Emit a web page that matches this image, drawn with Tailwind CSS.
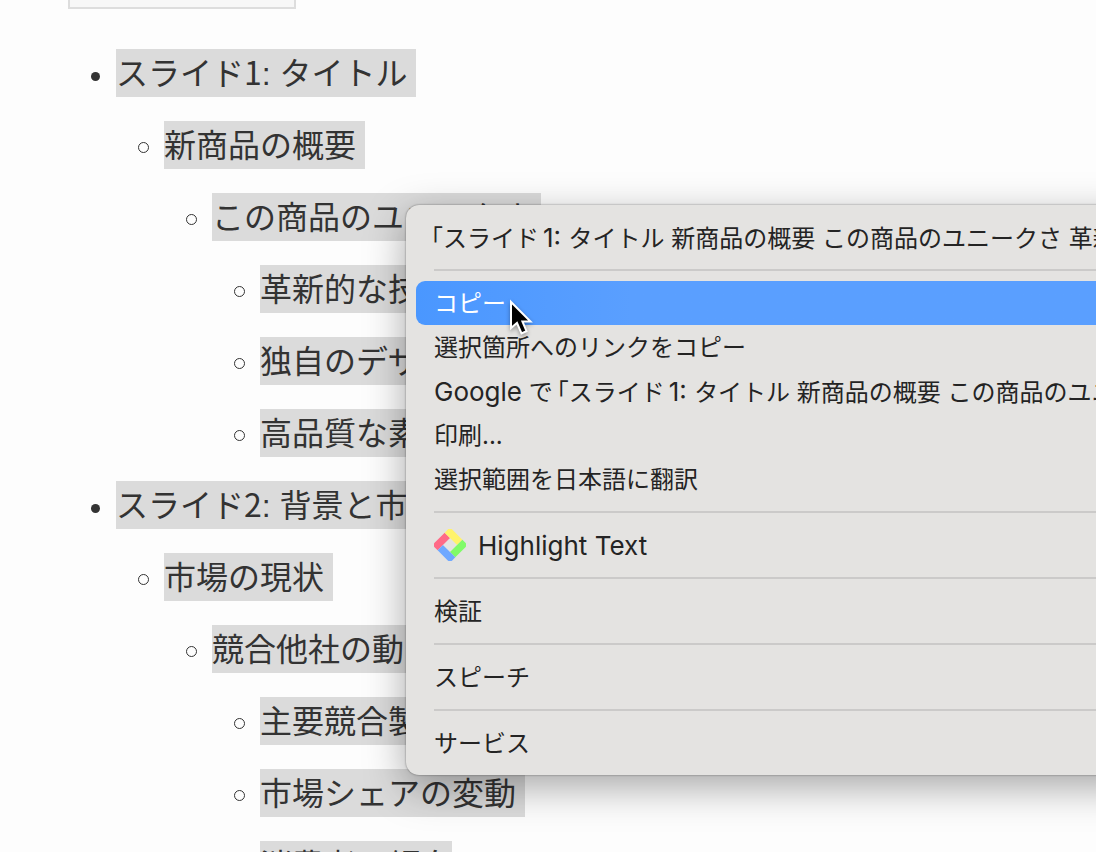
<!DOCTYPE html>
<html lang="ja">
<head>
<meta charset="utf-8">
<title>スライド構成</title>
<script src="https://cdn.jsdelivr.net/npm/@tailwindcss/browser@4"></script>
</head>
<body class="h-screen overflow-hidden bg-[#fdfdfd] font-['Noto_Sans_CJK_JP',sans-serif] text-[#333]">
<main class="pl-[68px]">
  <div class="h-[9px] w-[228px] border-2 border-t-0 border-[#ddd] bg-[#f7f7f7]"></div>
  <ul class="mt-10 flex flex-col gap-6 text-[32px] leading-[44px] whitespace-nowrap">
    <li>
      <div class="flex"><span class="flex w-12 items-center pt-1.5 pl-[23px]"><i class="size-[9px] rounded-full bg-[#333]"></i></span><span class="bg-[#dbdbdb] pr-2 pb-1">スライド1<span class="font-['Liberation_Sans',sans-serif] leading-none">: </span>タイトル</span></div>
      <ul class="mt-6 ml-12 flex flex-col gap-6">
        <li>
          <div class="flex"><span class="flex w-12 items-center pt-[5px] pl-[22px]"><i class="size-[11px] rounded-full border border-[#333]"></i></span><span class="bg-[#dbdbdb] pr-[9px] pb-1">新商品の概要</span></div>
          <ul class="mt-6 ml-12 flex flex-col gap-6">
            <li>
              <div class="flex"><span class="flex w-12 items-center pt-[5px] pl-[22px]"><i class="size-[11px] rounded-full border border-[#333]"></i></span><span class="bg-[#dbdbdb] pr-[9px] pb-1">この商品のユニークさ</span></div>
              <ul class="mt-6 ml-12 flex flex-col gap-6">
                <li class="flex"><span class="flex w-12 items-center pt-[5px] pl-[22px]"><i class="size-[11px] rounded-full border border-[#333]"></i></span><span class="bg-[#dbdbdb] pr-[9px] pb-1">革新的な技術</span></li>
                <li class="flex"><span class="flex w-12 items-center pt-[5px] pl-[22px]"><i class="size-[11px] rounded-full border border-[#333]"></i></span><span class="bg-[#dbdbdb] pr-[9px] pb-1">独自のデザイン</span></li>
                <li class="flex"><span class="flex w-12 items-center pt-[5px] pl-[22px]"><i class="size-[11px] rounded-full border border-[#333]"></i></span><span class="bg-[#dbdbdb] pr-[9px] pb-1">高品質な素材</span></li>
              </ul>
            </li>
          </ul>
        </li>
      </ul>
    </li>
    <li>
      <div class="flex"><span class="flex w-12 items-center pt-1.5 pl-[23px]"><i class="size-[9px] rounded-full bg-[#333]"></i></span><span class="bg-[#dbdbdb] pr-2 pb-1">スライド2<span class="font-['Liberation_Sans',sans-serif] leading-none">: </span>背景と市場分析</span></div>
      <ul class="mt-6 ml-12 flex flex-col gap-6">
        <li>
          <div class="flex"><span class="flex w-12 items-center pt-[5px] pl-[22px]"><i class="size-[11px] rounded-full border border-[#333]"></i></span><span class="bg-[#dbdbdb] pr-[9px] pb-1">市場の現状</span></div>
          <ul class="mt-6 ml-12 flex flex-col gap-6">
            <li>
              <div class="flex"><span class="flex w-12 items-center pt-[5px] pl-[22px]"><i class="size-[11px] rounded-full border border-[#333]"></i></span><span class="bg-[#dbdbdb] pr-[9px] pb-1">競合他社の動向</span></div>
              <ul class="mt-6 ml-12 flex flex-col gap-6">
                <li class="flex"><span class="flex w-12 items-center pt-[5px] pl-[22px]"><i class="size-[11px] rounded-full border border-[#333]"></i></span><span class="bg-[#dbdbdb] pr-[9px] pb-1">主要競合製品</span></li>
                <li class="flex"><span class="flex w-12 items-center pt-[5px] pl-[22px]"><i class="size-[11px] rounded-full border border-[#333]"></i></span><span class="bg-[#dbdbdb] pr-[9px] pb-1">市場シェアの変動</span></li>
                <li class="flex"><span class="flex w-12 items-center pt-[5px] pl-[22px]"><i class="size-[11px] rounded-full border border-[#333]"></i></span><span class="bg-[#dbdbdb] pb-1">消費者の傾向</span></li>
              </ul>
            </li>
          </ul>
        </li>
      </ul>
    </li>
  </ul>
</main>

<div role="menu" class="absolute top-[205px] -right-12 left-[406px] flex flex-col overflow-hidden rounded-[13px] bg-[#e4e3e1] p-2.5 font-['Inter','Noto_Sans_CJK_JP',sans-serif] text-2xl leading-10 whitespace-nowrap text-[#242424] shadow-[0_0_2px_rgba(0,0,0,0.5),0_12px_40px_rgba(0,0,0,0.35)]">
  <button role="menuitem" class="h-11 px-[15px] pt-[3px] text-left"><span class="[font-feature-settings:'halt']">「</span>スライド<span class="ml-1 text-[26px]">1: </span>タイトル 新商品の概要 この商品のユニークさ 革新的な技術</button>
  <hr class="mx-[18px] my-2.5 border-t-2 border-[#cbcac9]">
  <button role="menuitem" class="h-11 rounded-[9px] bg-linear-to-r from-[#4a97ff] to-[#5a9fff] to-30% px-[18px] pt-0.5 text-left text-white">コピー</button>
  <button role="menuitem" class="h-11 px-[18px] pt-0.5 text-left">選択箇所へのリンクをコピー</button>
  <button role="menuitem" class="h-11 px-[18px] pt-[3px] text-left"><span class="text-[26px]">Google</span> で<span class="ml-1 [font-feature-settings:'halt']">「</span>スライド<span class="ml-1 text-[26px]">1: </span>タイトル 新商品の概要 この商品のユニークさ</button>
  <button role="menuitem" class="h-11 px-[18px] pt-0.5 text-left">印刷...</button>
  <button role="menuitem" class="h-11 px-[18px] pt-0.5 text-left">選択範囲を日本語に翻訳</button>
  <hr class="mx-[18px] my-2.5 border-t-2 border-[#cbcac9]">
  <button role="menuitem" class="flex h-11 items-center gap-3 px-[18px] text-left">
    <svg class="size-8" viewBox="0 0 32 32" aria-hidden="true"><g transform="rotate(45 16 16)"><path d="M7 3.500H21V11H3.500V7A3.500 3.500 0 0 1 7 3.500Z" fill="#ff6a87" transform="rotate(-90 16 16)"/><path d="M7 3.500H21V11H3.500V7A3.500 3.500 0 0 1 7 3.500Z" fill="#fff36b"/><path d="M7 3.500H21V11H3.500V7A3.500 3.500 0 0 1 7 3.500Z" fill="#80fb69" transform="rotate(90 16 16)"/><path d="M7 3.500H21V11H3.500V7A3.500 3.500 0 0 1 7 3.500Z" fill="#6fa8ff" transform="rotate(180 16 16)"/></g></svg>
    <span class="pt-0.5 text-[26px]">Highlight Text</span>
  </button>
  <hr class="mx-[18px] my-2.5 border-t-2 border-[#cbcac9]">
  <button role="menuitem" class="h-11 px-[18px] pt-0.5 text-left">検証</button>
  <hr class="mx-[18px] my-2.5 border-t-2 border-[#cbcac9]">
  <button role="menuitem" class="h-11 px-[18px] pt-0.5 text-left">スピーチ</button>
  <hr class="mx-[18px] my-2.5 border-t-2 border-[#cbcac9]">
  <button role="menuitem" class="h-11 px-[18px] pt-0.5 text-left">サービス</button>
</div>

<svg class="absolute top-[299px] left-[508px] h-10 w-7 drop-shadow-[0_2px_2px_rgba(0,0,0,0.35)]" viewBox="0 0 28 40" aria-hidden="true"><path d="M3 3V29L9 24L13.500 34.500L18.500 32.200L14.400 22.500H22.500Z" fill="#000" stroke="#fff" stroke-width="2"/></svg>
</body>
</html>
